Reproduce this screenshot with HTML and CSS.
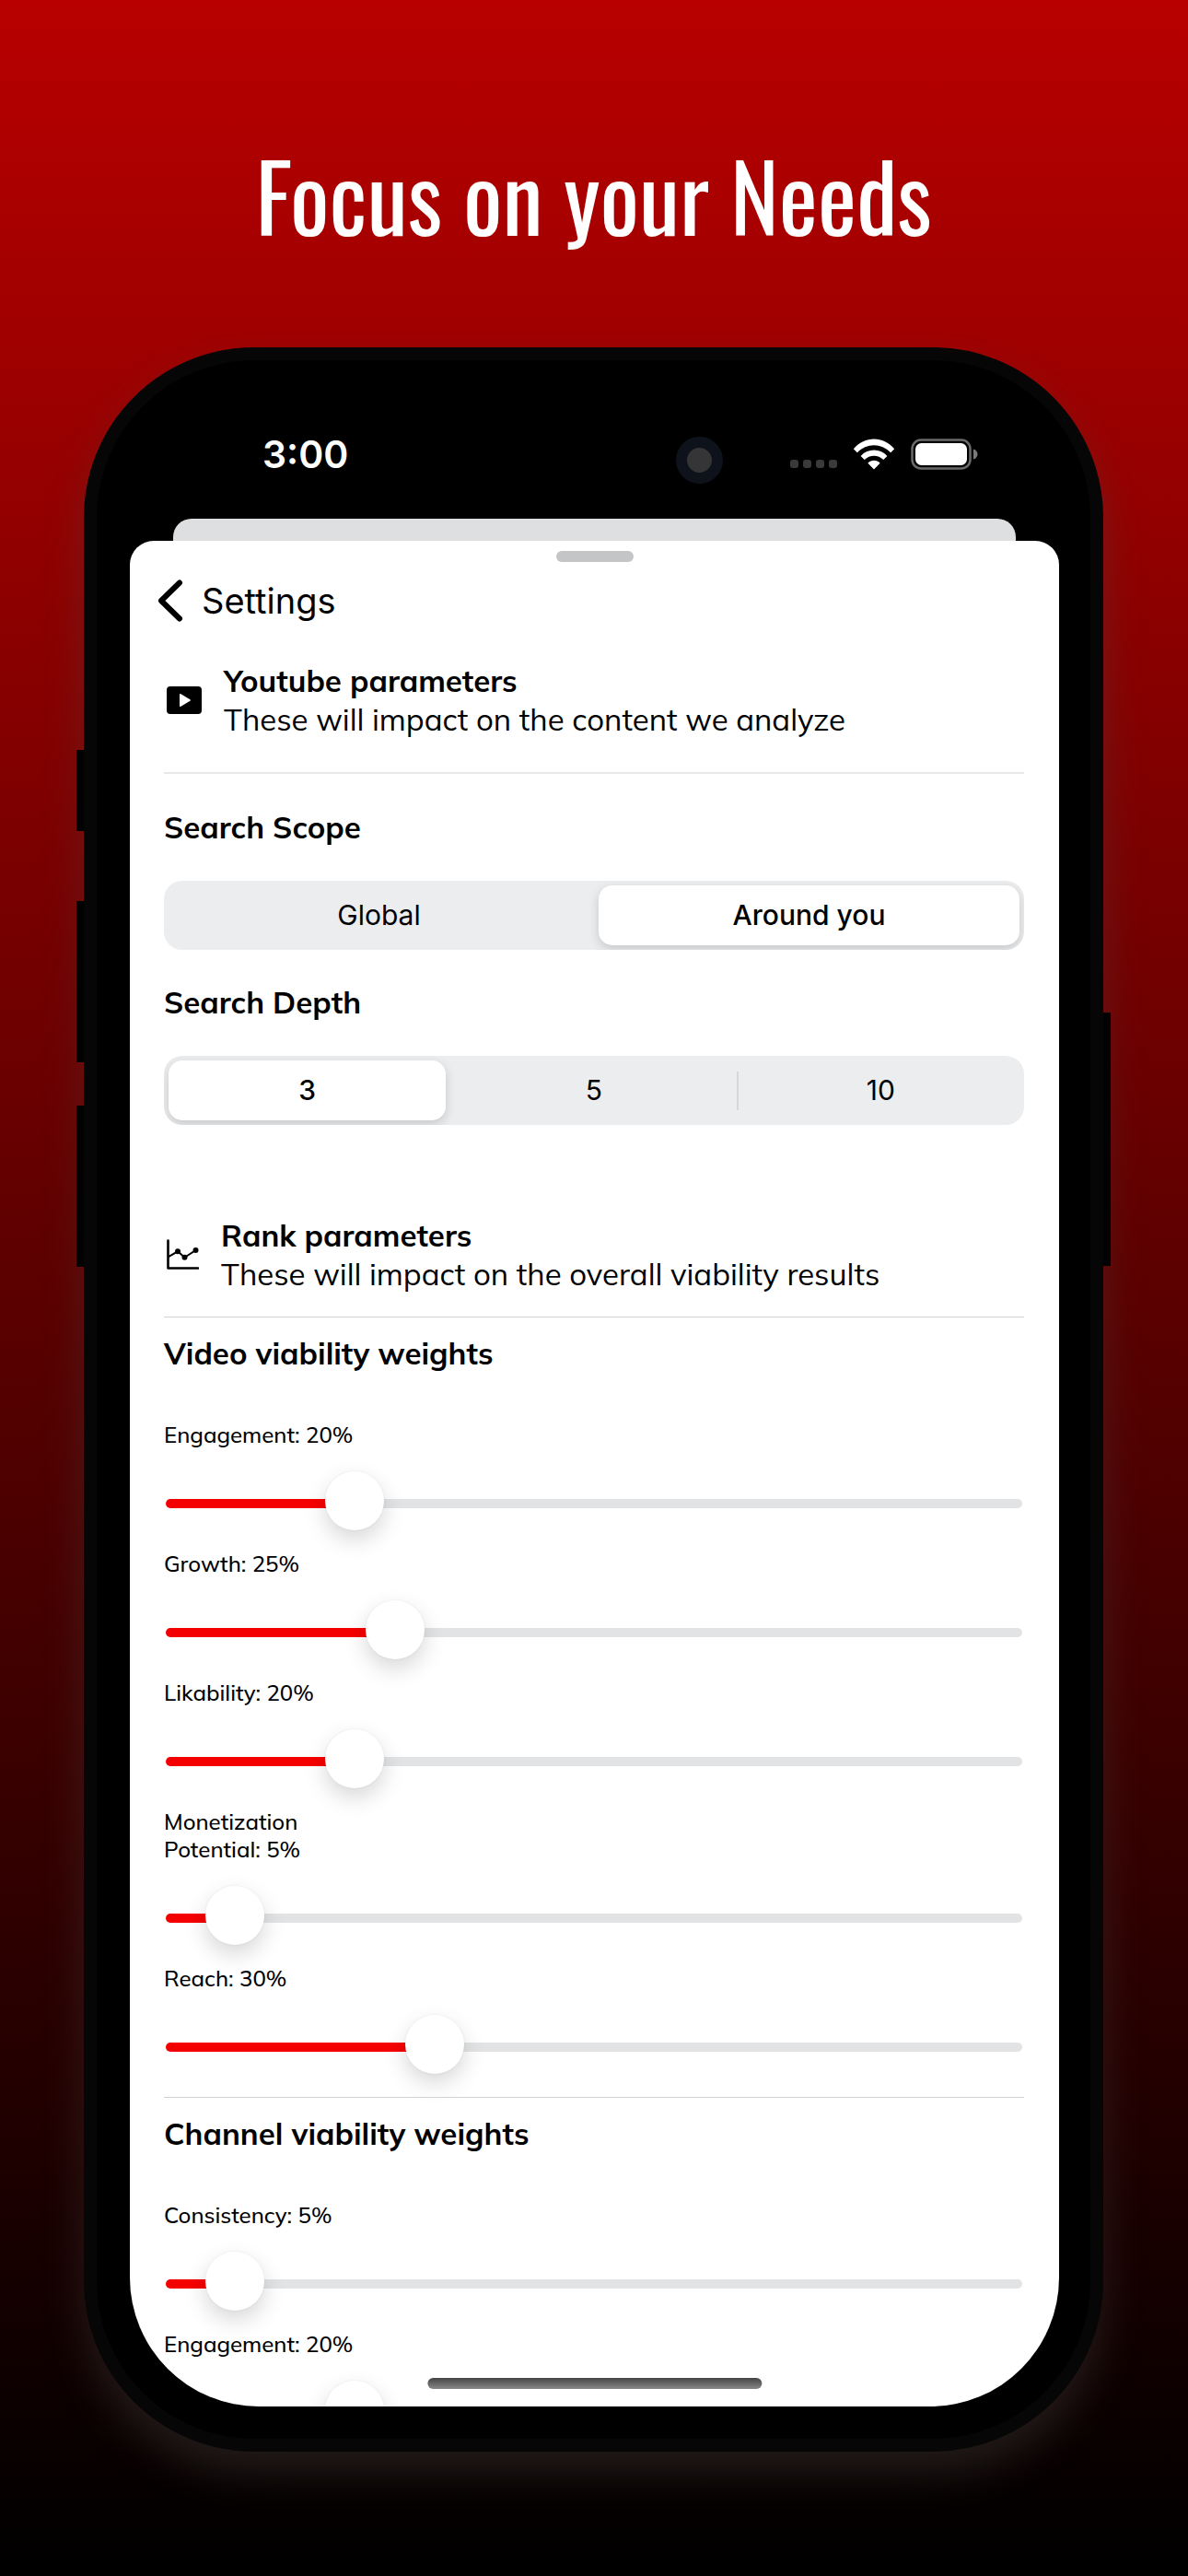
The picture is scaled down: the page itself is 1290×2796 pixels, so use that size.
FILE: index.html
```html
<!DOCTYPE html>
<html lang="en">
<head>
  <meta charset="utf-8">
  <meta name="viewport" content="width=device-width, initial-scale=1">
  <title>Focus on your Needs</title>
  <link rel="stylesheet" href="styles.css">
</head>
<body>
<h1 class="headline">Focus on your Needs</h1>

<div class="phone">
  <span class="side-button mute"></span>
  <span class="side-button volume-up"></span>
  <span class="side-button volume-down"></span>
  <span class="side-button power"></span>

  <div class="status">
    <span class="time">3:00</span>
    <span class="camera"></span>
    <span class="dots"><i></i><i></i><i></i><i></i></span>
    <svg class="wifi" width="46" height="34" viewBox="0 0 46 34" fill="#fff">
      <path d="M0.8 11.2 C13 -3 33 -3 45.2 11.2 L41.2 15.3 C31 4.4 15 4.4 4.8 15.3 Z"/>
      <path d="M8.6 18.9 C16.6 10.4 29.4 10.4 37.4 18.9 L33.3 23.1 C27.5 17.3 18.5 17.3 12.7 23.1 Z"/>
      <path d="M16.4 26.7 C20 22.9 26 22.9 29.6 26.7 L23 33.6 Z"/>
    </svg>
    <svg class="battery" width="74" height="34" viewBox="0 0 74 34">
      <rect x="1.5" y="1.5" width="63" height="31" rx="9.5" fill="none" stroke="#6a6a6a" stroke-width="2.5"/>
      <rect x="5" y="5" width="56" height="24" rx="6.5" fill="#fff"/>
      <path d="M68 11.5 C74 13 74 21 68 22.5 Z" fill="#7a7a7a"/>
    </svg>
  </div>

  <div class="card-behind"></div>

  <div class="sheet">
    <div class="grabber"></div>

    <div class="nav">
      <button type="button" class="back" aria-label="Back">
        <svg width="28" height="46" viewBox="0 0 28 46" fill="none" stroke="#000" stroke-width="6" stroke-linecap="round" stroke-linejoin="round">
          <path d="M24 3.5 L4 23 L24 42.5"/>
        </svg>
      </button>
      <span class="nav-title">Settings</span>
    </div>

    <div class="content">
      <div class="section-head">
        <svg width="38" height="30" viewBox="0 0 38 30">
          <rect width="38" height="30" rx="4" fill="#000"/>
          <path d="M14 9 Q14 7.5 15.4 8.3 L25.4 14.2 Q26.6 15 25.4 15.8 L15.4 21.7 Q14 22.5 14 21 Z" fill="#fff"/>
        </svg>
        <div>
          <h2>Youtube parameters</h2>
          <p>These will impact on the content we analyze</p>
        </div>
      </div>
      <hr class="thick">

      <fieldset class="choice">
        <legend>Search Scope</legend>
        <div class="segments">
          <input type="radio" name="scope" id="scope-global">
          <label for="scope-global">Global</label>
          <input type="radio" name="scope" id="scope-around" checked>
          <label for="scope-around">Around you</label>
        </div>
      </fieldset>

      <fieldset class="choice">
        <legend>Search Depth</legend>
        <div class="segments">
          <input type="radio" name="depth" id="depth-3" checked>
          <label for="depth-3">3</label>
          <input type="radio" name="depth" id="depth-5">
          <label for="depth-5">5</label>
          <span class="separator"></span>
          <input type="radio" name="depth" id="depth-10">
          <label for="depth-10">10</label>
        </div>
      </fieldset>

      <div class="section-head rank">
        <svg width="35" height="34" viewBox="0 0 35 34" fill="none" stroke="#000">
          <path d="M1.5 1.5 V31.5 H34" stroke-width="2.6" stroke-linecap="round" stroke-linejoin="round"/>
          <path d="M1.5 19.3 L12 13.3 L19.5 19.8 L31.5 12" stroke-width="2"/>
          <g fill="#000" stroke="none">
            <circle cx="12" cy="13.3" r="3"/>
            <circle cx="19.5" cy="19.8" r="3"/>
            <circle cx="31.5" cy="12" r="3"/>
          </g>
        </svg>
        <div>
          <h2>Rank parameters</h2>
          <p>These will impact on the overall viability results</p>
        </div>
      </div>
      <hr>

      <section class="weights">
        <h2>Video viability weights</h2>
        <div class="weight">
          <label for="video-engagement">Engagement: 20%</label>
          <input type="range" id="video-engagement" value="20" style="--value: 20%">
        </div>
        <div class="weight">
          <label for="video-growth">Growth: 25%</label>
          <input type="range" id="video-growth" value="25" style="--value: 25%">
        </div>
        <div class="weight">
          <label for="video-likability">Likability: 20%</label>
          <input type="range" id="video-likability" value="20" style="--value: 20%">
        </div>
        <div class="weight">
          <label for="video-monetization">Monetization Potential: 5%</label>
          <input type="range" id="video-monetization" value="5" style="--value: 5%">
        </div>
        <div class="weight">
          <label for="video-reach">Reach: 30%</label>
          <input type="range" id="video-reach" value="30" style="--value: 30%">
        </div>
      </section>
      <hr class="between">

      <section class="weights">
        <h2>Channel viability weights</h2>
        <div class="weight">
          <label for="channel-consistency">Consistency: 5%</label>
          <input type="range" id="channel-consistency" value="5" style="--value: 5%">
        </div>
        <div class="weight">
          <label for="channel-engagement">Engagement: 20%</label>
          <input type="range" id="channel-engagement" value="20" style="--value: 20%">
        </div>
      </section>
    </div>

    <div class="home-indicator"></div>
  </div>
</div>
</body>
</html>
```
FILE: styles.css
```css
* {
  box-sizing: border-box;
}

body {
  margin: 0;
  height: 100vh;
  padding: 0 92px 135px 91px;
  display: flex;
  flex-direction: column;
  background: linear-gradient(#b80000, #000);
  color: #000;
  font-family: Mulish, Muli, Nunito, Lato, "Open Sans", sans-serif;
  font-size: 33px;
  line-height: 42px;
}

h1, h2, p {
  margin: 0;
}

h2, legend {
  font-size: 33px;
  line-height: 42px;
  font-weight: bold;
}

.headline {
  height: 377px;
  padding-top: 146px;
  color: #fff;
  font-family: Oswald, "Roboto Condensed", "Liberation Sans Narrow", "DejaVu Sans Condensed", sans-serif;
  font-size: 100px;
  line-height: 130px;
  font-weight: normal;
  text-align: center;
  white-space: nowrap;
}

/* device */

.phone {
  position: relative;
  flex: 1;
  min-height: 0;
  display: flex;
  flex-direction: column;
  padding: 0 34px 35px 36px;
  border: 14px solid #060606;
  border-radius: 185px;
  background: #000;
  box-shadow: 0 24px 44px rgba(80, 76, 72, 0.34);
}

.side-button {
  position: absolute;
  left: -22px;
  width: 8px;
  background: #020202;
}

.mute {
  top: 423px;
  height: 88px;
}

.volume-up {
  top: 587px;
  height: 175px;
}

.volume-down {
  top: 809px;
  height: 175px;
}

.power {
  left: auto;
  right: -22px;
  top: 708px;
  height: 275px;
}

.status {
  display: flex;
  align-items: center;
  height: 172px;
  padding: 32px 87px 0 144px;
  color: #fff;
}

.time {
  font-family: Inter, sans-serif;
  font-size: 41px;
  font-weight: 600;
}

.camera {
  width: 51px;
  height: 51px;
  margin: 12px 73px 0 auto;
  border: 12px solid #0d121b;
  border-radius: 50%;
  background: #353537;
}

.dots {
  display: flex;
  gap: 5px;
  margin: 20px 17px 0 0;
}

.dots i {
  width: 9px;
  height: 9px;
  border-radius: 3px;
  background: #3a3a3c;
}

.battery {
  margin-left: 17px;
}

/* sheet */

.card-behind {
  height: 24px;
  margin: 0 47px;
  border-radius: 20px 20px 0 0;
  background: #dedfe1;
}

.sheet {
  position: relative;
  flex: 1;
  min-height: 0;
  overflow: hidden;
  border-radius: 26px 26px 140px 140px;
  background: #fff;
}

.grabber {
  width: 84px;
  height: 12px;
  margin: 11px auto 0;
  border-radius: 6px;
  background: #c4c5c6;
}

.nav {
  display: flex;
  align-items: center;
  gap: 20px;
  height: 84px;
  padding-left: 30px;
}

.back {
  display: flex;
  padding: 0;
  border: 0;
  background: none;
}

.nav-title {
  font-family: Inter, sans-serif;
  font-size: 38px;
}

.content {
  padding: 24px 38px 0 37px;
}

.section-head {
  display: flex;
  align-items: center;
  gap: 24px;
  padding-left: 3px;
}

.rank {
  margin-top: 99px;
}

hr {
  height: 1px;
  margin: 25px 0 18px;
  border: 0;
  background: #d2d3d4;
}

hr.thick {
  height: 2px;
  margin: 36px 0 37px;
  background: #e8e8ea;
}

hr.between {
  margin-top: 19px;
}

.choice {
  min-width: 0;
  margin: 0 0 36px;
  padding: 0;
  border: 0;
}

legend {
  padding: 0;
}

.segments {
  display: flex;
  align-items: center;
  height: 75px;
  margin-top: 37px;
  overflow: hidden;
  border-radius: 20px;
  background: #ecedef;
}

.segments input {
  position: absolute;
  opacity: 0;
}

.segments label {
  flex: 1;
  margin: 0 5px;
  border-radius: 15px;
  font-family: Inter, sans-serif;
  font-size: 30px;
  line-height: 65px;
  text-align: center;
}

.segments input:checked + label {
  background: #fff;
  box-shadow: 0 4px 12px rgba(0, 0, 0, 0.16);
  font-weight: 500;
}

.separator {
  width: 2px;
  height: 42px;
  margin: 0 -1px;
  background: #d6d7d9;
}

/* sliders */

.weights h2 {
  margin-bottom: 52px;
}

.weight {
  margin-bottom: 15px;
}

.weight label {
  display: block;
  width: 220px;
  margin-bottom: 25px;
  font-size: 24px;
  line-height: 30px;
  font-weight: 500;
}

.weight input {
  -webkit-appearance: none;
  appearance: none;
  display: block;
  width: calc(100% - 4px);
  height: 70px;
  margin: 0 2px;
  background: none;
}

.weight input::-webkit-slider-runnable-track {
  height: 10px;
  border-radius: 5px;
  background: linear-gradient(to right, #f50000 var(--value), #e2e3e4 var(--value));
}

.weight input::-webkit-slider-thumb {
  -webkit-appearance: none;
  width: 64px;
  height: 64px;
  margin-top: -30px;
  border-radius: 50%;
  background: #fff;
  box-shadow: 0 10px 24px rgba(0, 0, 0, 0.16), 0 0 3px rgba(0, 0, 0, 0.06);
}

.home-indicator {
  position: absolute;
  left: 50%;
  bottom: 19px;
  width: 36%;
  height: 12px;
  transform: translateX(-50%);
  border-radius: 6px;
  background: linear-gradient(#444, #888);
}
```
